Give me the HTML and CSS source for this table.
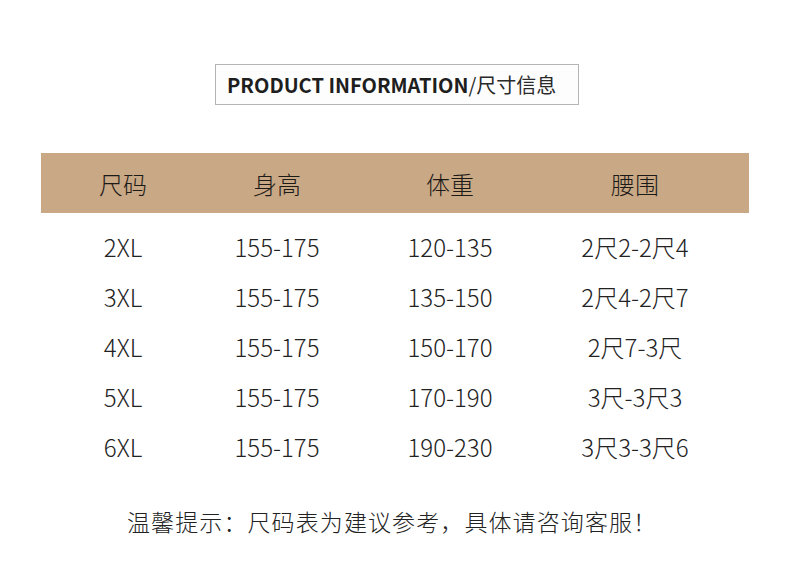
FILE: index.html
```html
<!DOCTYPE html>
<html lang="zh-CN">
<head>
<meta charset="utf-8">
<link rel="stylesheet" href="styles.css">
</head>
<body>
<div class="page">
  <div class="title-wrap">
    <div class="title"><span class="title-en">PRODUCT INFORMATION</span><span class="title-cn">/尺寸信息</span></div>
  </div>
  <div class="table">
    <div class="row head">
      <div class="c c1">尺码</div>
      <div class="c c2">身高</div>
      <div class="c c3">体重</div>
      <div class="c c4">腰围</div>
    </div>
    <div class="body">
      <div class="row">
        <div class="c c1">2XL</div><div class="c c2">155-175</div><div class="c c3">120-135</div><div class="c c4">2尺2-2尺4</div>
      </div>
      <div class="row">
        <div class="c c1">3XL</div><div class="c c2">155-175</div><div class="c c3">135-150</div><div class="c c4">2尺4-2尺7</div>
      </div>
      <div class="row">
        <div class="c c1">4XL</div><div class="c c2">155-175</div><div class="c c3">150-170</div><div class="c c4">2尺7-3尺</div>
      </div>
      <div class="row">
        <div class="c c1">5XL</div><div class="c c2">155-175</div><div class="c c3">170-190</div><div class="c c4">3尺-3尺3</div>
      </div>
      <div class="row">
        <div class="c c1">6XL</div><div class="c c2">155-175</div><div class="c c3">190-230</div><div class="c c4">3尺3-3尺6</div>
      </div>
    </div>
  </div>
  <div class="note">温馨提示：尺码表为建议参考，具体请咨询客服！</div>
</div>
</body>
</html>
```

FILE: styles.css
```css
html, body {
  margin: 0;
  padding: 0;
  background: #ffffff;
}
body {
  font-family: "Noto Sans CJK SC", "Noto Sans", sans-serif;
  color: #222222;
  width: 790px;
  height: 578px;
  overflow: hidden;
}
.page {
  display: flex;
  flex-direction: column;
  padding-top: 64px;
}
.title-wrap {
  display: flex;
  padding-left: 215px;
}
.title {
  box-sizing: border-box;
  width: 364px;
  height: 41px;
  border: 1px solid #b4b4b4;
  background: #fdfdfd;
  display: flex;
  align-items: center;
  padding-left: 11px;
  white-space: nowrap;
}
.title-en {
  font-weight: 700;
  font-size: 20px;
  color: #1e1e1e;
}
.title-cn {
  font-weight: 400;
  font-size: 20px;
  color: #2a2a2a;
}
.table {
  margin-top: 48px;
  margin-left: 41px;
  width: 708px;
}
.row {
  display: grid;
  grid-template-columns: 164px 144px 202px 168px 30px;
  height: 50px;
  align-items: center;
}
.c {
  text-align: center;
  font-size: 24px;
  font-weight: 300;
  white-space: nowrap;
}
.head {
  height: 60px;
  background: #c9a886;
}
.head .c {
  color: #1c1a17;
}
.body {
  padding-top: 8px;
}
.body .c {
  color: #222222;
}
.note {
  margin-top: 25px;
  height: 50px;
  display: flex;
  align-items: center;
  padding-left: 127px;
  font-size: 23px;
  font-weight: 300;
  letter-spacing: 1.1px;
  color: #222222;
  white-space: nowrap;
}
```
